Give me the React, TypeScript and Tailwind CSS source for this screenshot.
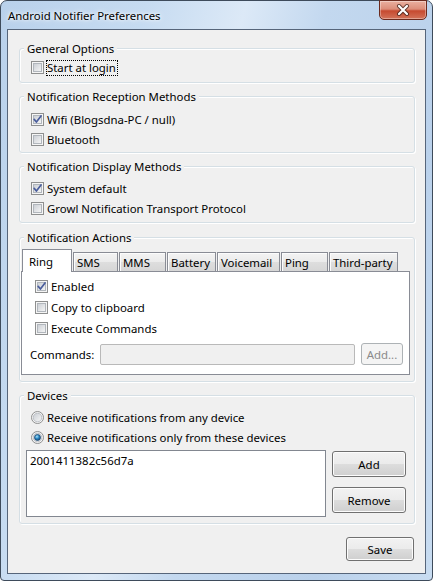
import React from "react";

function CheckBox({ checked = false }: { checked?: boolean }) {
  return (
    <svg width="13" height="13" viewBox="0 0 13 13" className="block shrink-0">
      <defs>
        <linearGradient id="cbFill" x1="0" y1="0" x2="1" y2="1">
          <stop offset="0" stopColor="#c9cdd3" />
          <stop offset="1" stopColor="#f7f7f7" />
        </linearGradient>
      </defs>
      <rect x="0.5" y="0.5" width="12" height="12" fill="#f5f5f5" stroke="#8e8f8f" />
      <rect x="2.5" y="2.5" width="8" height="8" fill="url(#cbFill)" stroke="#b1b6bc" />
      {checked && (
        <path d="M3.2 6.4 L5.4 9 L10 3" fill="none" stroke="#4a5d9c" strokeWidth="1.7" strokeLinecap="round" strokeLinejoin="round" />
      )}
    </svg>
  );
}

function Radio({ checked = false }: { checked?: boolean }) {
  return (
    <svg width="13" height="13" viewBox="0 0 13 13" className="block shrink-0">
      <defs>
        <linearGradient id="rbFill" x1="0" y1="0" x2="1" y2="1">
          <stop offset="0" stopColor="#c9cdd3" />
          <stop offset="1" stopColor="#f7f7f7" />
        </linearGradient>
        <radialGradient id="rbDot" cx="0.4" cy="0.35" r="0.75">
          <stop offset="0" stopColor="#a9e4fb" />
          <stop offset="0.45" stopColor="#2a86c2" />
          <stop offset="1" stopColor="#0d3a66" />
        </radialGradient>
      </defs>
      <circle cx="6.5" cy="6.5" r="6" fill="#f5f5f5" stroke="#8e8f8f" />
      <circle cx="6.5" cy="6.5" r="4.3" fill="url(#rbFill)" stroke="#b1b6bc" strokeWidth="0.8" />
      {checked && <circle cx="6.5" cy="6.5" r="3" fill="url(#rbDot)" stroke="#1b4670" strokeWidth="0.7" />}
    </svg>
  );
}

function Button({
  children,
  className = "",
  disabled = false,
}: {
  children: React.ReactNode;
  className?: string;
  disabled?: boolean;
}) {
  const look = disabled
    ? "border-[#adb2b5] bg-[#f4f4f4] text-[#8a8a8a]"
    : "border-[#707070] bg-[linear-gradient(#f2f2f2_0%,#ebebeb_50%,#dddddd_50%,#cfcfcf_100%)] shadow-[inset_0_0_0_1px_#fcfcfc] text-black";
  return (
    <div className={`flex shrink-0 items-center justify-center rounded-[3px] border ${look} ${className}`}>
      {children}
    </div>
  );
}

function Group({
  title,
  className = "",
  children,
}: {
  title: string;
  className?: string;
  children: React.ReactNode;
}) {
  return (
    <fieldset
      className={`rounded-[3px] border border-[#d5dfe5] shadow-[inset_1px_1px_0_#ffffff,1px_1px_0_#ffffff] ${className}`}
    >
      <legend className="ml-[4px] bg-[#f0f0f0] px-[3px] leading-[15px]">{title}</legend>
      {children}
    </fieldset>
  );
}

function CheckRow({ label, checked = false }: { label: string; checked?: boolean }) {
  return (
    <div className="flex h-[20px] items-center">
      <CheckBox checked={checked} />
      <span className="ml-[3px]">{label}</span>
    </div>
  );
}

const tabs = [
  { label: "Ring", w: "w-[50px]", selected: true },
  { label: "SMS", w: "w-[45px]", selected: false },
  { label: "MMS", w: "w-[47px]", selected: false },
  { label: "Battery", w: "w-[49px]", selected: false },
  { label: "Voicemail", w: "w-[63px]", selected: false },
  { label: "Ping", w: "w-[47px]", selected: false },
  { label: "Third-party", w: "w-[69px]", selected: false },
];

export default function App() {
  return (
    <div className="h-[581px] w-[433px] font-['Noto_Sans',sans-serif] text-[11.4px] leading-[15px] text-black">
      <div className="flex h-full w-full flex-col rounded-t-[7px] rounded-b-[4px] border border-[#3e4b5b] bg-[linear-gradient(105deg,#b9d1eb_0%,#c6dbf1_25%,#dce9f7_42%,#c3d8ef_56%,#bad1eb_80%,#c8dcf1_100%)]">
        {/* title bar */}
        <div className="flex h-[28px] shrink-0 items-center pl-[7px]">
          <span className="[text-shadow:0_0_6px_#ffffff,0_0_3px_#ffffff]">Android Notifier Preferences</span>
          <div className="-mt-px ml-auto mr-[5px] self-start">
            <div className="flex h-[20px] w-[48px] items-center justify-center rounded-b-[5px] border border-[#6b2a1e] bg-[linear-gradient(#eab0a0_0%,#dc8d79_45%,#c64a30_55%,#d3735a_100%)] shadow-[inset_0_0_0_1px_rgba(255,255,255,0.35)]">
              <svg width="14" height="12" viewBox="0 0 14 12">
                <path d="M3 2 L11 10 M11 2 L3 10" stroke="#3b1c16" strokeOpacity="0.75" strokeWidth="4" strokeLinecap="round" />
                <path d="M3 2 L11 10 M11 2 L3 10" stroke="#ffffff" strokeWidth="2.2" strokeLinecap="round" />
              </svg>
            </div>
          </div>
        </div>

        {/* client area */}
        <div className="mx-[6px] mb-[6px] flex flex-1 flex-col border border-[#56657a] bg-[#f0f0f0] pl-[11px] pr-[10px] pt-[11px]">
          <Group title="General Options">
            <div className="pb-[6px] pl-[11px] pt-[3px]">
              <div className="flex h-[17px] items-center">
                <CheckBox />
                <span className="ml-[2px] border border-dotted border-black pr-[1px] leading-[14px]">Start at login</span>
              </div>
            </div>
          </Group>

          <Group title="Notification Reception Methods" className="mt-[6px]">
            <div className="pb-[3px] pl-[11px] pt-[5px]">
              <CheckRow label="Wifi (Blogsdna-PC / null)" checked />
              <CheckRow label="Bluetooth" />
            </div>
          </Group>

          <Group title="Notification Display Methods" className="mt-[6px]">
            <div className="pb-[4px] pl-[11px] pt-[4px]">
              <CheckRow label="System default" checked />
              <CheckRow label="Growl Notification Transport Protocol" />
            </div>
          </Group>

          <Group title="Notification Actions" className="mt-[7px]">
            <div className="pb-[6px] pl-[1px] pr-[4px] pt-[4px]">
              <div className="relative z-10 ml-[1px] flex h-[22px] items-end gap-[1px]">
                {tabs.map((t) =>
                  t.selected ? (
                    <div
                      key={t.label}
                      className={`${t.w} -mb-px flex h-[23px] items-center border border-b-0 border-[#898c95] bg-white pl-[6px]`}
                    >
                      {t.label}
                    </div>
                  ) : (
                    <div
                      key={t.label}
                      className={`${t.w} flex h-[19px] items-center border border-b-0 border-[#898c95] bg-[linear-gradient(#f3f3f3_0%,#ebebeb_50%,#dedede_50%,#d6d6d6_100%)] pl-[3px] shadow-[inset_1px_1px_0_#fcfcfc]`}
                    >
                      {t.label}
                    </div>
                  )
                )}
              </div>
              <div className="border border-[#898c95] bg-white pb-[9px] pt-[4px]">
                <div className="pl-[13px]">
                  <div className="flex h-[21px] items-center">
                    <CheckBox checked />
                    <span className="ml-[3px]">Enabled</span>
                  </div>
                  <div className="flex h-[21px] items-center">
                    <CheckBox />
                    <span className="ml-[3px]">Copy to clipboard</span>
                  </div>
                  <div className="flex h-[21px] items-center">
                    <CheckBox />
                    <span className="ml-[3px]">Execute Commands</span>
                  </div>
                </div>
                <div className="mt-[4px] flex h-[22px] items-center pl-[8px] pr-[6px]">
                  <span className="w-[70px] shrink-0">Commands:</span>
                  <div className="h-[21px] flex-1 rounded-[2px] border border-[#b9b9b9] bg-[#f0f0f0]" />
                  <Button disabled className="ml-[6px] h-[22px] w-[42px]">
                    Add...
                  </Button>
                </div>
              </div>
            </div>
          </Group>

          <Group title="Devices" className="mt-[6px]">
            <div className="pb-[6px] pt-[4px]">
              <div className="pl-[11px]">
                <div className="flex h-[20px] items-center">
                  <Radio />
                  <span className="ml-[3px]">Receive notifications from any device</span>
                </div>
                <div className="flex h-[20px] items-center">
                  <Radio checked />
                  <span className="ml-[3px]">Receive notifications only from these devices</span>
                </div>
              </div>
              <div className="mt-[3px] flex pl-[6px] pr-[8px]">
                <div className="h-[67px] w-[300px] border border-[#828790] bg-white pl-[3px] pt-[2px]">
                  2001411382c56d7a
                </div>
                <div className="ml-[6px] flex flex-1 flex-col pt-[1px]">
                  <Button className="h-[26px] w-full">Add</Button>
                  <Button className="mt-[10px] h-[26px] w-full">Remove</Button>
                </div>
              </div>
            </div>
          </Group>

          <div className="mt-[13px] flex justify-end pr-[1px]">
            <Button className="h-[24px] w-[68px]">Save</Button>
          </div>
        </div>
      </div>
    </div>
  );
}
